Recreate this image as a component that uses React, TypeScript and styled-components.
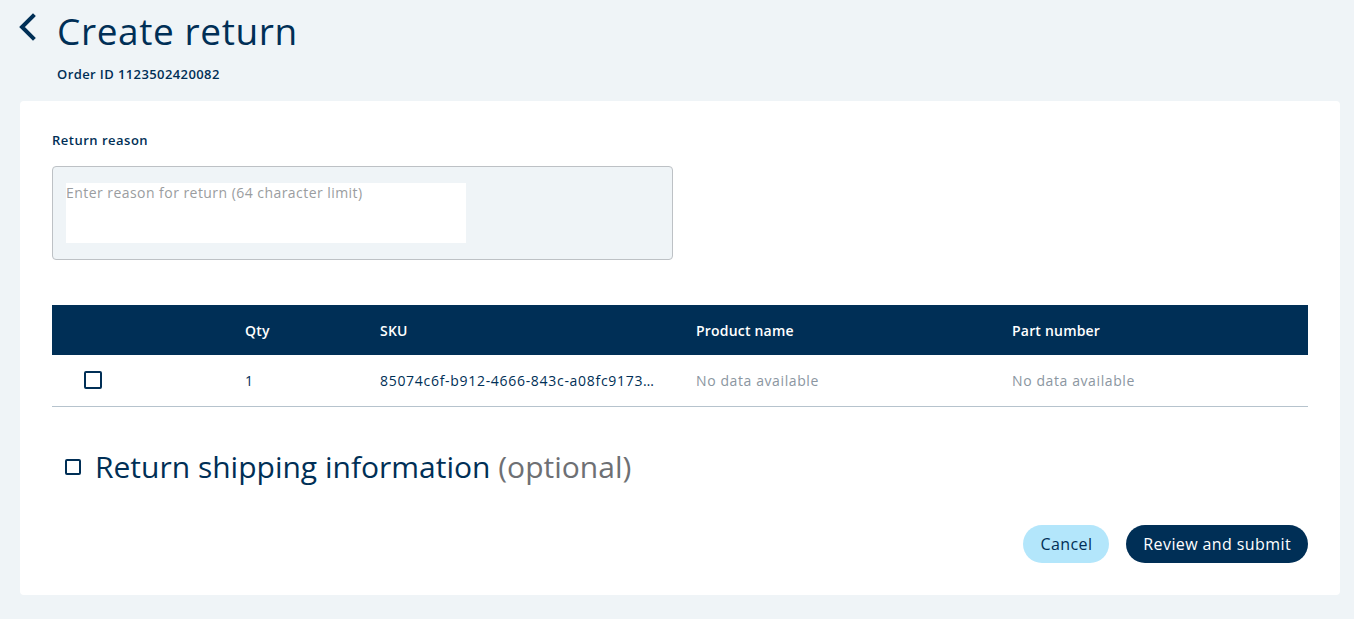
import React from "react";
import styled, { createGlobalStyle } from "styled-components";

const navy = "#002f56";

const Global = createGlobalStyle`
  html, body { margin: 0; padding: 0; background: #eff4f7; }
  body { font-family: "Open Sans", "Noto Sans", sans-serif; color: ${navy}; }
  * { box-sizing: border-box; }
`;

const Page = styled.div`
  width: 1354px;
  min-height: 619px;
  padding: 0 14px 22px 20px;
`;

const Header = styled.header`
  display: grid;
  grid-template-columns: 37px auto;
  padding-top: 8px;
  height: 101px;
`;

const BackButton = styled.button`
  border: none;
  background: none;
  padding: 0;
  margin: 5px 0 0 -2px;
  width: 18px;
  height: 28px;
  cursor: pointer;
  align-self: start;
`;

const Title = styled.h1`
  margin: 0;
  font-size: 37px;
  font-weight: 400;
  line-height: 46px;
  letter-spacing: 0.6px;
  color: ${navy};
`;

const OrderId = styled.div`
  grid-column: 2;
  font-size: 13px;
  font-weight: 600;
  letter-spacing: 0.4px;
  margin-top: -7px;
  color: ${navy};
`;

const Card = styled.main`
  background: #fff;
  border-radius: 4px;
  padding: 30px 32px 32px 32px;
`;

const Label = styled.label`
  display: block;
  font-size: 13px;
  font-weight: 600;
  letter-spacing: 0.5px;
  color: ${navy};
  margin-bottom: 17px;
`;

const FieldBox = styled.div`
  width: 621px;
  height: 94px;
  background: #eff4f7;
  border: 1px solid #bdc1c5;
  border-radius: 4px;
  padding: 16px 13px;
`;

const TextArea = styled.textarea`
  display: block;
  width: 400px;
  height: 60px;
  border: none;
  resize: none;
  outline: none;
  background: #fff;
  padding: 0;
  font-family: inherit;
  font-size: 14px;
  letter-spacing: 0.45px;
  color: ${navy};
  &::placeholder { color: #9a9da0; }
`;

const Table = styled.table`
  width: 100%;
  border-collapse: collapse;
  margin-top: 45px;
`;

const HeadCell = styled.th<{ $w?: number }>`
  background: ${navy};
  color: #fff;
  font-size: 14px;
  font-weight: 600;
  letter-spacing: 0.2px;
  text-align: left;
  height: 50px;
  padding: 0;
  width: ${(p) => (p.$w ? `${p.$w}px` : "auto")};
`;

const Cell = styled.td<{ $muted?: boolean }>`
  height: 51px;
  padding: 0;
  font-size: 14px;
  letter-spacing: 0.6px;
  color: ${(p) => (p.$muted ? "#8b96a1" : navy)};
  border-bottom: 1px solid #b6c3cd;
  white-space: nowrap;
`;

const Sku = styled.span`
  letter-spacing: 0.7px;
`;

const Check = styled.span<{ $size: number }>`
  display: inline-block;
  width: ${(p) => p.$size}px;
  height: ${(p) => p.$size}px;
  border: 2px solid ${navy};
  border-radius: 2px;
  vertical-align: middle;
`;

const CheckCell = styled.div`
  padding-left: 32px;
  display: flex;
  align-items: center;
`;

const Shipping = styled.div`
  display: flex;
  align-items: center;
  gap: 14px;
  margin: 42px 0 0 13px;
  height: 36px;
`;

const ShippingTitle = styled.h2`
  margin: 0;
  font-size: 30px;
  font-weight: 400;
  color: ${navy};
`;

const Optional = styled.span`
  color: #6e7074;
`;

const Actions = styled.div`
  display: flex;
  justify-content: flex-end;
  gap: 17px;
  margin-top: 40px;
`;

const Button = styled.button<{ $primary?: boolean }>`
  height: 38px;
  border: none;
  border-radius: 19px;
  padding: 0 17px;
  font-family: inherit;
  font-size: 16px;
  letter-spacing: 0.4px;
  background: ${(p) => (p.$primary ? navy : "#b3e6fb")};
  color: ${(p) => (p.$primary ? "#fff" : navy)};
  font-weight: ${(p) => (p.$primary ? 500 : 400)};
  cursor: pointer;
`;

export default function App() {
  return (
    <Page>
      <Global />
      <Header>
        <BackButton aria-label="Back">
          <svg width="18" height="28" viewBox="0 0 18 28">
            <path d="M15 3 L4 14 L15 25" fill="none" stroke={navy} strokeWidth="4" strokeLinecap="square" />
          </svg>
        </BackButton>
        <Title>Create return</Title>
        <OrderId>Order ID 1123502420082</OrderId>
      </Header>
      <Card>
        <Label>Return reason</Label>
        <FieldBox>
          <TextArea placeholder="Enter reason for return (64 character limit)" />
        </FieldBox>
        <Table>
          <thead>
            <tr>
              <HeadCell $w={193} />
              <HeadCell $w={135}>Qty</HeadCell>
              <HeadCell $w={316}>SKU</HeadCell>
              <HeadCell $w={316}>Product name</HeadCell>
              <HeadCell>Part number</HeadCell>
            </tr>
          </thead>
          <tbody>
            <tr>
              <Cell>
                <CheckCell>
                  <Check $size={18} />
                </CheckCell>
              </Cell>
              <Cell>1</Cell>
              <Cell>
                <Sku>85074c6f-b912-4666-843c-a08fc9173…</Sku>
              </Cell>
              <Cell $muted>No data available</Cell>
              <Cell $muted>No data available</Cell>
            </tr>
          </tbody>
        </Table>
        <Shipping>
          <Check $size={16} />
          <ShippingTitle>
            Return shipping information <Optional>(optional)</Optional>
          </ShippingTitle>
        </Shipping>
        <Actions>
          <Button>Cancel</Button>
          <Button $primary>Review and submit</Button>
        </Actions>
      </Card>
    </Page>
  );
}
